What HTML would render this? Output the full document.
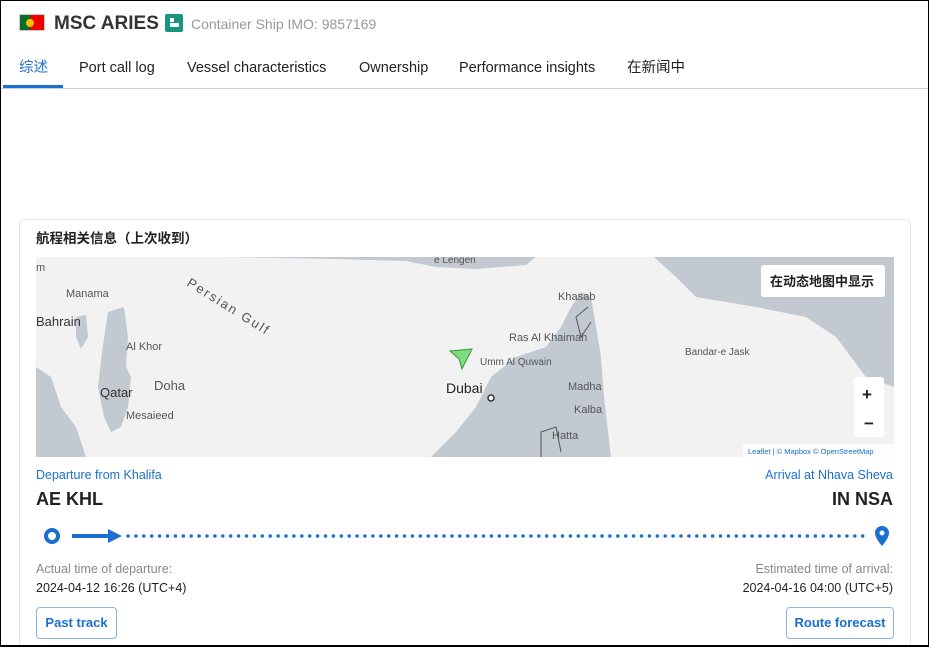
<!DOCTYPE html>
<html><head><meta charset="utf-8"><style>
*{box-sizing:border-box;margin:0;padding:0}
html,body{width:929px;height:647px;overflow:hidden}
body{background:#fff;font-family:"Liberation Sans","Noto Sans CJK SC",sans-serif;position:relative}
.a{position:absolute;white-space:nowrap}
.tab{position:absolute;top:60px;font-size:14.5px;line-height:17px;color:#222}
.blue{color:#1a6fd0}
.btn{position:absolute;top:607px;height:32px;border:1px solid #8fb5e3;border-radius:4px;color:#1a6fd0;font-weight:bold;font-size:13px;line-height:30px;text-align:center}
</style></head><body>
<div class="a" style="left:19px;top:14px;width:26px;height:17px;background:#e00;border:1px solid #ccc"><div style="width:10px;height:15px;background:#0a6a2a"></div><div style="position:absolute;left:6px;top:4px;width:8px;height:8px;border-radius:50%;background:#f2c200"></div></div>
<div class="a" style="left:54px;top:13px;font-size:19px;font-weight:bold;color:#333">MSC ARIES</div>
<div class="a" style="left:165px;top:14px;width:18px;height:18px;background:#16967a;border-radius:2px"><div style="position:absolute;left:5px;top:4px;width:4px;height:4px;background:#fff"></div><div style="position:absolute;left:5px;top:9px;width:9px;height:4px;background:#fff"></div></div>
<div class="a" style="left:191px;top:16px;font-size:14px;line-height:17px;color:#999">Container Ship IMO: 9857169</div>
<div class="tab blue" style="left:19px">综述</div>
<div class="a" style="left:3px;top:85px;width:60px;height:3px;background:#1a6fd0"></div>
<div class="tab" style="left:79px">Port call log</div>
<div class="tab" style="left:187px">Vessel characteristics</div>
<div class="tab" style="left:359px">Ownership</div>
<div class="tab" style="left:459px">Performance insights</div>
<div class="tab" style="left:627px">在新闻中</div>
<div class="a" style="left:0;top:88px;width:929px;height:1px;background:#ccc"></div>
<div class="a" style="left:19px;top:219px;width:892px;height:440px;border:1px solid #e6e6e6;border-radius:6px"></div>
<div class="a" style="left:36px;top:230px;font-size:13.5px;line-height:17px;font-weight:bold;color:#222">航程相关信息（上次收到）</div>
<svg class="a" style="left:36px;top:257px" width="858" height="200" viewBox="0 0 858 200">
<rect width="858" height="200" fill="#f2f2f2"/>
<g fill="#c2c9d0">
<path d="M0 110 L15 120 L25 150 L40 170 L50 200 L0 200Z"/>
<path d="M72 55 L88 50 L92 80 L90 110 L95 120 L92 150 L85 170 L75 175 L68 160 L62 130 L66 95Z"/>
<path d="M40 60 L50 58 L52 80 L45 92 L40 80Z"/>
<path d="M190 0 L500 0 L490 8 L440 12 L400 10 L370 4 L300 2Z"/>
<path d="M618 0 L858 0 L858 130 L830 120 L800 80 L770 60 L720 50 L660 40 L640 20Z"/>
<path d="M395 200 L420 175 L440 150 L455 120 L480 100 L510 90 L525 70 L535 50 L545 35 L555 40 L560 70 L565 100 L568 140 L575 200Z"/>
</g>
<g fill="none" stroke="#555" stroke-width="1"><path d="M552 50 L540 60 L545 80 L555 65"/><path d="M505 200 L505 175 L520 170 L525 195"/></g>
<path d="M414 94 L436 92 L426 112 L423 102Z" fill="#7edc7e" stroke="#3a9a3a"/>
<circle cx="455" cy="141" r="3" fill="#fff" stroke="#333" stroke-width="1.5"/>
<g font-family="Liberation Sans,sans-serif" fill="#555" font-size="11">
<text x="0" y="14">m</text><text x="30" y="40">Manama</text><text x="0" y="69" font-size="13" fill="#333">Bahrain</text>
<text x="90" y="93">Al Khor</text><text x="64" y="140" font-size="13" fill="#333">Qatar</text><text x="118" y="133" font-size="13">Doha</text><text x="90" y="162">Mesaieed</text>
<text x="410" y="136" font-size="14" fill="#222">Dubai</text><text x="444" y="108" font-size="10">Umm Al Quwain</text>
<text x="473" y="84">Ras Al Khaimah</text><text x="522" y="43">Khasab</text><text x="532" y="133">Madha</text><text x="538" y="156">Kalba</text><text x="516" y="182">Hatta</text>
<text x="649" y="98" font-size="10">Bandar-e Jask</text><text x="398" y="6" font-size="10">e Lengen</text>
<text x="150" y="28" font-size="13" transform="rotate(32 150 28)" letter-spacing="2">Persian Gulf</text>
</g>
<rect x="725" y="8" width="124" height="32" rx="3" fill="#fff"/>
<text x="734" y="29" font-size="13" font-weight="bold" font-family="Noto Sans CJK SC,sans-serif" fill="#222">在动态地图中显示</text>
<rect x="818" y="120" width="30" height="60" rx="3" fill="#fff"/>
<text x="826" y="143" font-size="17" font-weight="bold" fill="#222">+</text><text x="828" y="172" font-size="17" font-weight="bold" fill="#222">−</text>
<rect x="707" y="187" width="151" height="13" fill="#fff" opacity=".8"/>
<text x="712" y="197" font-size="7.5" fill="#1a6fd0">Leaflet | © Mapbox © OpenStreetMap</text>
</svg>
<div class="a blue" style="left:36px;top:468px;font-size:12.5px">Departure from Khalifa</div>
<div class="a blue" style="right:36px;top:468px;font-size:12.5px">Arrival at Nhava Sheva</div>
<div class="a" style="left:36px;top:489px;font-size:18px;font-weight:bold;color:#222">AE KHL</div>
<div class="a" style="right:36px;top:489px;font-size:18px;font-weight:bold;color:#222">IN NSA</div>
<svg class="a" style="left:36px;top:522px" width="858" height="30">
<circle cx="16" cy="14" r="6" fill="none" stroke="#1a6fd0" stroke-width="4"/>
<line x1="36" y1="14" x2="76" y2="14" stroke="#1a6fd0" stroke-width="4"/>
<path d="M72 7 L86 14 L72 21Z" fill="#1a6fd0"/>
<line x1="92" y1="14" x2="830" y2="14" stroke="#1a6fd0" stroke-width="3.5" stroke-dasharray="0 7.9" stroke-linecap="round"/>
<path d="M846 24 C840 17 839 13 839 11 A7 7 0 0 1 853 11 C853 13 852 17 846 24Z" fill="#1a6fd0"/>
<circle cx="846" cy="11" r="2.5" fill="#fff"/>
</svg>
<div class="a" style="left:36px;top:562px;font-size:12.5px;color:#888">Actual time of departure:</div>
<div class="a" style="right:36px;top:562px;font-size:12.5px;color:#888">Estimated time of arrival:</div>
<div class="a" style="left:36px;top:581px;font-size:12.5px;color:#222">2024-04-12 16:26 (UTC+4)</div>
<div class="a" style="right:36px;top:581px;font-size:12.5px;color:#222">2024-04-16 04:00 (UTC+5)</div>
<div class="btn" style="left:36px;width:81px">Past track</div>
<div class="btn" style="left:786px;width:108px">Route forecast</div>
<div class="a" style="left:0;top:0;width:929px;height:647px;border:1px solid #000;border-bottom-width:2px;pointer-events:none"></div>
</body></html>
